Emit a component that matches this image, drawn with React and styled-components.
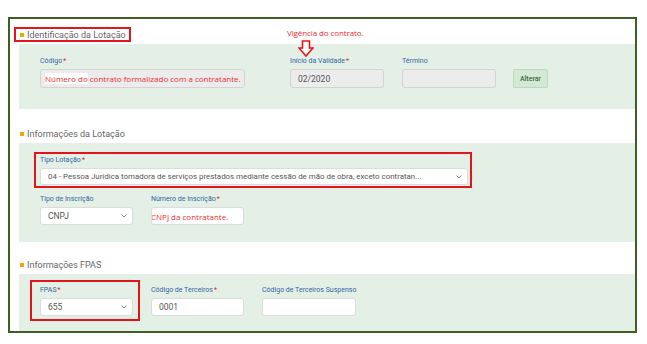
import React from 'react';
import styled, { createGlobalStyle } from 'styled-components';

const GlobalStyle = createGlobalStyle`
  body {
    margin: 0;
    background: #fff;
    font-family: Roboto, "Liberation Sans", sans-serif;
  }
`;

const Chevron = () => (
  <svg width="6" height="4" viewBox="0 0 6 4">
    <path d="M0.5 0.5 L3 3 L5.5 0.5" fill="none" stroke="#777" strokeWidth="0.9" />
  </svg>
);

const DownArrow = () => (
  <svg width="16" height="17" viewBox="0 0 16 17">
    <path
      d="M4.5 1 H11.5 V8 H15 L8 16 L1 8 H4.5 Z"
      fill="#fff"
      stroke="#e8141c"
      strokeWidth="1.6"
      strokeLinejoin="miter"
    />
  </svg>
);

const App = () => {
  return (
    <Page>
      <GlobalStyle />
      <Frame>
        <Section>
          <Heading>
            <Boxed $inset="-3px -5px -2px -6px">
              <Bullet />
              <span>Identificação da Lotação</span>
            </Boxed>
            <Note>Vigência do contrato.</Note>
            <ArrowMark>
              <DownArrow />
            </ArrowMark>
          </Heading>
          <Panel $pt={13} $pb={21}>
            <Row>
              <Field $w={205} $mr={45}>
                <Label>Código<Req>*</Req></Label>
                <Input $h={19} $disabled>
                  <RedText><Mark>Número do</Mark> contrato formalizado com a contratante.</RedText>
                </Input>
              </Field>
              <Field $w={94} $mr={18}>
                <Label>Início da Validade<Req>*</Req></Label>
                <Input $h={19} $disabled $fs={8.5}>02/2020</Input>
              </Field>
              <Field $w={94} $mr={17}>
                <Label>Término</Label>
                <Input $h={19} $disabled />
              </Field>
              <Button>Alterar</Button>
            </Row>
          </Panel>
        </Section>

        <Section $mt={16}>
          <Heading>
            <Bullet />
            <span>Informações da Lotação</span>
          </Heading>
          <Panel $pt={13} $pb={17}>
            <Boxed $inset="-4px -4px -3px -6px">
              <Field $w={428}>
                <Label>Tipo Lotação<Req>*</Req></Label>
                <Input $h={17} $fs={7.9}>
                  <span>04 - Pessoa Jurídica tomadora de serviços prestados mediante cessão de mão de obra, exceto contratan...</span>
                  <Chevron />
                </Input>
              </Field>
            </Boxed>
            <Row $mt={10}>
              <Field $w={93} $mr={18}>
                <Label>Tipo de Inscrição</Label>
                <Input $h={18} $fs={8.5}>
                  <span>CNPJ</span>
                  <Chevron />
                </Input>
              </Field>
              <Field $w={93}>
                <Label>Número de Inscrição<Req>*</Req></Label>
                <Input $h={18} $pl={2}>
                  <RedText>CNPJ da contratante.</RedText>
                </Input>
              </Field>
            </Row>
          </Panel>
        </Section>

        <Section $mt={14}>
          <Heading>
            <Bullet />
            <span>Informações FPAS</span>
          </Heading>
          <Panel $pt={12} $pb={15}>
            <Row>
              <Boxed $inset="-6px -7px -5px -10px" $mr={18}>
                <Field $w={93}>
                  <Label>FPAS<Req>*</Req></Label>
                  <Input $h={18} $fs={8.5}>
                    <span>655</span>
                    <Chevron />
                  </Input>
                </Field>
              </Boxed>
              <Field $w={93} $mr={18}>
                <Label>Código de Terceiros<Req>*</Req></Label>
                <Input $h={18} $fs={8.5}>0001</Input>
              </Field>
              <Field $w={94}>
                <Label>Código de Terceiros Suspenso</Label>
                <Input $h={18} />
              </Field>
            </Row>
          </Panel>
        </Section>
      </Frame>
    </Page>
  );
};

export default App;

const Page = styled.div`
  padding: 17px 0 0 8px;
`;

const Frame = styled.div`
  box-sizing: border-box;
  width: 629px;
  height: 316px;
  border: 2px solid #3e5e24;
  padding-top: 7px;
  overflow: hidden;
`;

const Section = styled.section`
  margin-top: ${(p) => p.$mt || 0}px;
`;

const Heading = styled.div`
  position: relative;
  display: flex;
  align-items: center;
  gap: 3px;
  height: 18px;
  padding-left: 10px;
  font-size: 9px;
  color: #666;
`;

const Bullet = styled.i`
  display: inline-block;
  width: 4px;
  height: 4px;
  background: #f2a600;
`;

const Boxed = styled.div`
  position: relative;
  display: flex;
  width: fit-content;
  align-items: center;
  gap: 3px;
  margin-right: ${(p) => p.$mr || 0}px;
  &::after {
    content: '';
    position: absolute;
    inset: ${(p) => p.$inset};
    border: 2px solid #e3141e;
    pointer-events: none;
  }
`;

const Note = styled.span`
  position: absolute;
  left: 277px;
  top: 1px;
  font-family: "Open Sans", sans-serif;
  font-size: 8px;
  color: #ee2b33;
  letter-spacing: -0.1px;
`;

const ArrowMark = styled.span`
  position: absolute;
  left: 288px;
  top: 14px;
  line-height: 0;
  z-index: 2;
`;

const Panel = styled.div`
  margin-left: 9px;
  background: #e4efe6;
  padding: ${(p) => p.$pt}px 0 ${(p) => p.$pb}px 21px;
`;

const Row = styled.div`
  display: flex;
  align-items: flex-end;
  margin-top: ${(p) => p.$mt || 0}px;
`;

const Field = styled.div`
  display: flex;
  flex-direction: column;
  width: ${(p) => p.$w}px;
  margin-right: ${(p) => p.$mr || 0}px;
`;

const Label = styled.label`
  font-size: 7px;
  line-height: 9px;
  color: #2f68a3;
  margin-bottom: 3px;
  white-space: nowrap;
`;

const Req = styled.span`
  color: #e3141e;
  margin-left: 1px;
`;

const Input = styled.div`
  box-sizing: border-box;
  display: flex;
  align-items: center;
  justify-content: space-between;
  height: ${(p) => p.$h}px;
  padding: 0 5px 0 ${(p) => (p.$pl != null ? p.$pl : 7)}px;
  background: ${(p) => (p.$disabled ? '#ececec' : '#fff')};
  border: 1px solid ${(p) => (p.$disabled ? '#d3d3d3' : '#dcdcdc')};
  border-radius: 3px;
  font-size: ${(p) => p.$fs || 8}px;
  color: #555;
  white-space: nowrap;
  overflow: hidden;
`;

const RedText = styled.span`
  font-family: "Open Sans", sans-serif;
  font-size: 8px;
  color: #ee2b33;
  margin-left: -3px;
`;

const Mark = styled.span`
  background: #fff;
`;

const Button = styled.button`
  box-sizing: border-box;
  height: 19px;
  width: 35px;
  padding: 0;
  background: #d3e8d5;
  border: 1px solid #bcd9bf;
  border-radius: 2px;
  color: #3c6a3c;
  font-family: Roboto, sans-serif;
  font-size: 7px;
  font-weight: 500;
`;
